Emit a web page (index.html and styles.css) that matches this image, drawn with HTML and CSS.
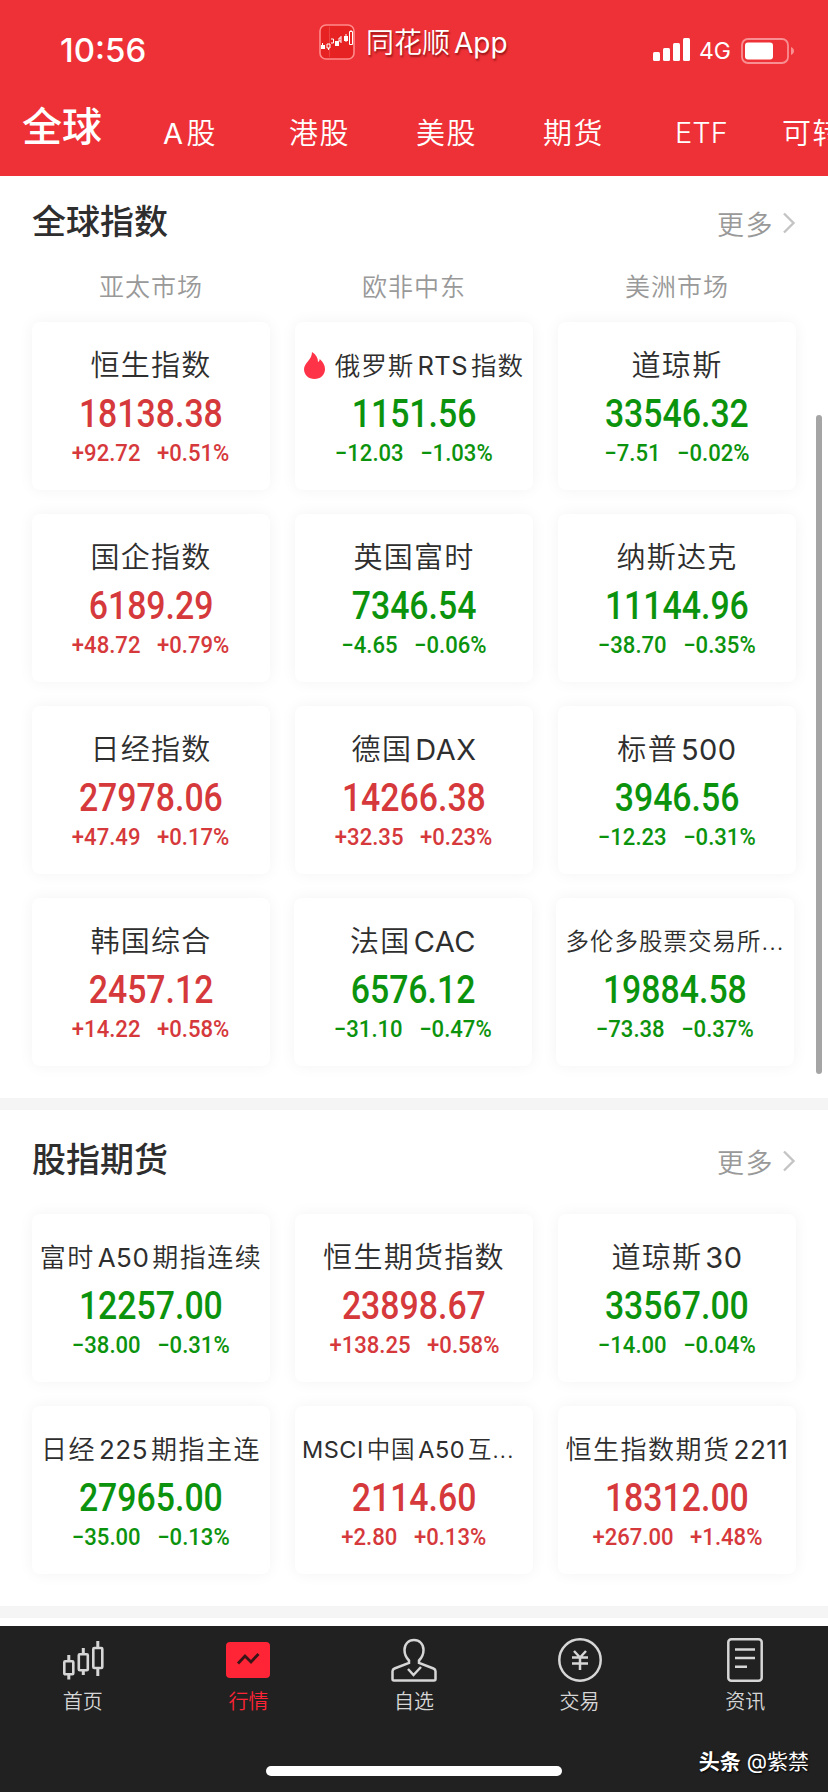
FILE: index.html
```html
<!DOCTYPE html>
<html lang="zh-CN">
	<head>
		<meta charset="UTF-8" />
		<meta name="viewport" content="width=device-width, initial-scale=1.0" />
		<title>行情</title>
		<link rel="stylesheet" href="styles.css">
	</head>
	<body>
		<header class="header">
			<div class="status">
				<span class="time">10:56</span>
				<div class="app">
					<svg class="app_logo" width="36" height="36" viewBox="0 0 36 36" fill="none">
						<rect x="1" y="1" width="34" height="34" rx="6" fill="#e62222" stroke="#ff8a8a" stroke-width="1.6" />
						<path d="M10.5 3v30" stroke="#f04a4a" stroke-width=".8" />
						<path d="M2 21h4v4H2zM16 17h4v5h-4zM25 12h4v5h-4z" fill="#fff" />
						<path d="M3.500 19v2M8 20h3v4H8zM9.500 24v2M12 15h2.500v4H12M22 14h-2v3h2M22 12v7M27 10v8M30.500 7.500h3v13h-3zM32 6v1.500" stroke="#fff" />
					</svg>
					<span>同花顺<span class="app_latin">App</span></span>
				</div>
				<div class="signal">
					<svg width="38" height="24" viewBox="0 0 38 24" fill="#fff">
						<rect x="0" y="14" width="7" height="9" rx="1.500" />
						<rect x="10" y="10" width="7" height="13" rx="1.500" />
						<rect x="20" y="5" width="7" height="18" rx="1.500" />
						<rect x="30" y="0" width="7" height="23" rx="1.500" />
					</svg>
					<span class="network">4G</span>
					<svg width="54" height="26" viewBox="0 0 54 26" fill="none">
						<rect x="1" y="1" width="46" height="24" rx="6" stroke="#f88f92" stroke-width="1.8" />
						<rect x="4" y="4.500" width="28" height="17" rx="3" fill="#fff" />
						<path d="M50 9c4 1.500 4 6.500 0 8z" fill="#f88f92" />
					</svg>
				</div>
			</div>
			<nav class="tabs">
				<a class="tab tab_active">全球</a>
				<a class="tab"><span class="latin_first">A</span>股</a>
				<a class="tab">港股</a>
				<a class="tab">美股</a>
				<a class="tab">期货</a>
				<a class="tab tab_etf">ETF</a>
				<a class="tab">可转</a>
			</nav>
		</header>

		<main class="content">
			<section class="section">
				<div class="section_head">
					<h2>全球指数</h2>
					<a class="more">更多
						<svg width="14" height="22" viewBox="0 0 14 22" fill="none" stroke="#c4c4c4" stroke-width="2.400"><path d="M2 1.500l9.500 9.500L2 20.500" /></svg>
					</a>
				</div>
				<div class="markets">
					<span>亚太市场</span>
					<span>欧非中东</span>
					<span>美洲市场</span>
				</div>
				<div class="grid">
					<div class="card up">
						<p class="name">恒生指数</p>
						<p class="price">18138.38</p>
						<p class="change"><span>+92.72</span><span>+0.51%</span></p>
					</div>
					<div class="card down">
						<p class="name name_hot">
							<svg width="21" height="27" viewBox="0 0 21 27"><path d="M8 0c4 2.500 6 6 6 10 1-.5 1.600-1.500 1.700-3C19 10 21 13 21 17c0 6-4.500 10-10.500 10S0 23 0 17C0 11 8 8 8 0z" fill="#ff3347" /></svg>
							<span>俄罗斯<span class="latin">RTS</span>指数</span>
						</p>
						<p class="price">1151.56</p>
						<p class="change"><span>−12.03</span><span>−1.03%</span></p>
					</div>
					<div class="card down">
						<p class="name">道琼斯</p>
						<p class="price">33546.32</p>
						<p class="change"><span>−7.51</span><span>−0.02%</span></p>
					</div>
					<div class="card up">
						<p class="name">国企指数</p>
						<p class="price">6189.29</p>
						<p class="change"><span>+48.72</span><span>+0.79%</span></p>
					</div>
					<div class="card down">
						<p class="name">英国富时</p>
						<p class="price">7346.54</p>
						<p class="change"><span>−4.65</span><span>−0.06%</span></p>
					</div>
					<div class="card down">
						<p class="name">纳斯达克</p>
						<p class="price">11144.96</p>
						<p class="change"><span>−38.70</span><span>−0.35%</span></p>
					</div>
					<div class="card up">
						<p class="name">日经指数</p>
						<p class="price">27978.06</p>
						<p class="change"><span>+47.49</span><span>+0.17%</span></p>
					</div>
					<div class="card up">
						<p class="name">德国<span class="latin_last">DAX</span></p>
						<p class="price">14266.38</p>
						<p class="change"><span>+32.35</span><span>+0.23%</span></p>
					</div>
					<div class="card down">
						<p class="name">标普<span class="latin_last">500</span></p>
						<p class="price">3946.56</p>
						<p class="change"><span>−12.23</span><span>−0.31%</span></p>
					</div>
				</div>
				<div class="grid grid_last">
					<div class="card up">
						<p class="name">韩国综合</p>
						<p class="price">2457.12</p>
						<p class="change"><span>+14.22</span><span>+0.58%</span></p>
					</div>
					<div class="card down">
						<p class="name">法国<span class="latin_last">CAC</span></p>
						<p class="price">6576.12</p>
						<p class="change"><span>−31.10</span><span>−0.47%</span></p>
					</div>
					<div class="card down">
						<p class="name name_sm">多伦多股票交易所...</p>
						<p class="price">19884.58</p>
						<p class="change"><span>−73.38</span><span>−0.37%</span></p>
					</div>
				</div>
			</section>

			<section class="section section_futures">
				<div class="section_head">
					<h2>股指期货</h2>
					<a class="more">更多
						<svg width="14" height="22" viewBox="0 0 14 22" fill="none" stroke="#c4c4c4" stroke-width="2.400"><path d="M2 1.500l9.500 9.500L2 20.500" /></svg>
					</a>
				</div>
				<div class="grid">
					<div class="card down">
						<p class="name name_md">富时<span class="latin">A50</span>期指连续</p>
						<p class="price">12257.00</p>
						<p class="change"><span>−38.00</span><span>−0.31%</span></p>
					</div>
					<div class="card up">
						<p class="name">恒生期货指数</p>
						<p class="price">23898.67</p>
						<p class="change"><span>+138.25</span><span>+0.58%</span></p>
					</div>
					<div class="card down">
						<p class="name">道琼斯<span class="latin_last">30</span></p>
						<p class="price">33567.00</p>
						<p class="change"><span>−14.00</span><span>−0.04%</span></p>
					</div>
					<div class="card down">
						<p class="name name_md">日经<span class="latin">225</span>期指主连</p>
						<p class="price">27965.00</p>
						<p class="change"><span>−35.00</span><span>−0.13%</span></p>
					</div>
					<div class="card up">
						<p class="name name_sm name_msci"><span class="latin_first">MSCI</span>中国<span class="latin">A50</span>互...</p>
						<p class="price">2114.60</p>
						<p class="change"><span>+2.80</span><span>+0.13%</span></p>
					</div>
					<div class="card up">
						<p class="name name_md">恒生指数期货<span class="latin_last">2211</span></p>
						<p class="price">18312.00</p>
						<p class="change"><span>+267.00</span><span>+1.48%</span></p>
					</div>
				</div>
			</section>
			<div class="scrollbar"></div>
		</main>

		<footer class="footer">
			<nav class="menu">
				<a class="menu_item">
					<svg width="44" height="44" viewBox="0 0 44 44" fill="none" stroke="#d6d6d6" stroke-width="2.600">
						<rect x="3.300" y="23.300" width="9" height="13" rx="1" />
						<rect x="17.800" y="16.300" width="9" height="16" rx="1" />
						<rect x="32.300" y="10" width="9" height="20" rx="1" />
						<path d="M7.800 17v6M7.800 37v4.500M22.300 10v6M22.300 33v4M36.800 3v7M36.800 30v8" stroke-width="3" />
					</svg>
					首页
				</a>
				<a class="menu_item menu_active">
					<svg width="44" height="44" viewBox="0 0 44 44" fill="none">
						<rect x="0" y="4" width="44" height="36" rx="4" fill="#ff2436" />
						<path d="M12 25.500l7-7.500 6 6 7.500-8" stroke="#3a1518" stroke-width="2.800" />
					</svg>
					行情
				</a>
				<a class="menu_item">
					<svg width="46" height="44" viewBox="0 0 46 44" fill="none" stroke="#d6d6d6" stroke-width="2.500">
						<path d="M18 25v-2.500C15 19.500 13.500 16 13.500 12c0-6 4-10 9.500-10s9.500 4 9.500 10c0 4-1.500 7.500-4.500 10.500V25l14.500 5.500c1.500.6 2 1.200 2 2.800V41c0 1-.5 1.500-1.500 1.500H3c-1 0-1.500-.5-1.500-1.500v-7.700c0-1.600.5-2.200 2-2.800z" />
						<path d="M17 31l5.500 6 7.500-8" />
					</svg>
					自选
				</a>
				<a class="menu_item">
					<svg width="44" height="44" viewBox="0 0 44 44" fill="none" stroke="#d6d6d6" stroke-width="2.500">
						<circle cx="22" cy="22" r="20.700" />
						<path d="M16 13l6 6.500 6-6.500M14 19.500h16M14 25.500h16M22 19.500V32" />
					</svg>
					交易
				</a>
				<a class="menu_item">
					<svg width="36" height="44" viewBox="0 0 36 44" fill="none" stroke="#d6d6d6" stroke-width="2.500">
						<rect x="1.300" y="1.300" width="33.400" height="41.400" rx="3" />
						<path d="M8 11.500h20M8 20h20M8 28.700h12" />
					</svg>
					资讯
				</a>
			</nav>
			<div class="home_bar"></div>
			<p class="author"><b>头条</b> @紫禁</p>
		</footer>
	</body>
</html>
```

FILE: styles.css
```css
* {
	box-sizing: border-box;
}

body {
	margin: 0;
	width: 828px;
	height: 1792px;
	overflow: hidden;
	display: flex;
	flex-direction: column;
	background: #fff;
	color: #2e2e2e;
	font-family: Inter, "Noto Sans CJK SC", sans-serif;
}

p,
h2 {
	margin: 0;
}

/* Red top area */
.header {
	height: 176px;
	background: #ee3137;
	color: #fff;
	overflow: hidden;
}

.status {
	display: grid;
	grid-template-columns: 319px 1fr 175px;
	height: 96px;
}

.time {
	padding: 30px 0 0 60px;
	font-size: 33px;
	font-weight: 500;
	line-height: 40px;
}

.app {
	display: flex;
	gap: 11px;
	padding-top: 24px;
	font-size: 28px;
	font-weight: 350;
	line-height: 38px;
	text-shadow: 1px 2px 2px rgba(90, 0, 0, 0.6);
}

.app_latin {
	margin-left: 4px;
	font-weight: 400;
}

.signal {
	display: flex;
	align-items: flex-start;
	padding-top: 38px;
}

.network {
	width: 43px;
	padding-left: 8px;
	margin-right: 7px;
	font-size: 23px;
	line-height: 26px;
}

.tabs {
	display: flex;
	align-items: center;
	padding-left: 22px;
	height: 70px;
	white-space: nowrap;
}

.tab {
	flex: none;
	width: 127px;
	padding-left: 13px;
	font-size: 29px;
	font-weight: 350;
	letter-spacing: 1.6px;
}

.tab:nth-child(2) {
	padding-left: 14px;
}

.tab_active {
	padding: 0 0 14px;
	font-size: 40px;
	font-weight: 500;
	letter-spacing: 0;
}

.tab_etf {
	width: 112px;
	padding: 2px 0 0 18px;
	letter-spacing: 0;
}

.latin,
.latin_first,
.latin_last {
	font-weight: 400;
	letter-spacing: 0.5px;
}

.latin {
	margin: 0 3px;
}

.latin_first {
	margin-right: 3px;
}

.latin_last {
	margin-left: 3px;
}

/* Quote sections */
.content {
	position: relative;
	height: 1450px;
}

.section {
	height: 934px;
	padding: 0 32px;
	border-bottom: 12px solid #f5f5f5;
}

.section_futures {
	height: 508px;
}

.section_head {
	display: flex;
	align-items: center;
	justify-content: space-between;
	height: 90px;
}

.section_futures .section_head {
	height: 104px;
	padding-bottom: 6px;
}

.section_head h2 {
	padding-bottom: 4px;
	font-size: 34px;
	font-weight: 500;
}

.more {
	display: flex;
	align-items: center;
	gap: 8px;
	padding-top: 4px;
	color: #999;
	font-size: 27px;
	font-weight: 350;
	letter-spacing: 1.5px;
}

.markets {
	display: grid;
	grid-template-columns: repeat(3, 238px);
	justify-content: space-between;
	height: 56px;
	color: #999;
	font-size: 25px;
	font-weight: 350;
	letter-spacing: 1px;
	line-height: 42px;
	text-align: center;
}

.grid {
	display: grid;
	grid-template-columns: repeat(3, 238px);
	justify-content: space-between;
	row-gap: 24px;
}

.grid_last {
	justify-content: start;
	column-gap: 24px;
	margin-top: 24px;
}

.card {
	display: flex;
	flex-direction: column;
	align-items: center;
	height: 168px;
	padding-top: 22px;
	border-radius: 8px;
	background: #fff;
	box-shadow: 0 0 16px rgba(0, 0, 0, 0.05);
	white-space: nowrap;
}

.name {
	font-size: 29px;
	font-weight: 350;
	letter-spacing: 1.3px;
	line-height: 43px;
}

.name_hot {
	display: flex;
	align-items: center;
	gap: 10px;
	font-size: 25.5px;
	letter-spacing: 1px;
}

.name_md {
	font-size: 26px;
	letter-spacing: 1.5px;
}

.name_sm {
	font-size: 23.5px;
	letter-spacing: 1px;
}

/* Clipped name starts at the card's left padding */
.name_msci {
	align-self: flex-start;
	padding-left: 7px;
	letter-spacing: 0.7px;
}

.up {
	color: #d6393b;
}

.down {
	color: #0c930e;
}

.card .name {
	color: #2e2e2e;
}

/* Narrow figures */
.price,
.change {
	font-family: Roboto, "Liberation Sans", sans-serif;
	font-weight: 500;
	transform: scaleX(0.89);
}

.price {
	font-size: 38px;
	line-height: 54px;
}

.change {
	display: flex;
	gap: 18px;
	font-size: 24px;
	line-height: 25px;
	transform: scaleX(0.92);
}

.scrollbar {
	position: absolute;
	top: 239px;
	right: 6px;
	width: 6px;
	height: 659px;
	border-radius: 3px;
	background: #a5a5a5;
}

/* Bottom menu */
.footer {
	position: relative;
	height: 166px;
	padding-top: 12px;
	background: #212121;
}

.menu {
	display: grid;
	grid-template-columns: repeat(5, 1fr);
}

.menu_item {
	display: flex;
	flex-direction: column;
	align-items: center;
	gap: 5px;
	color: #d6d6d6;
	font-size: 20px;
	font-weight: 350;
	line-height: 30px;
}

.menu_active {
	color: #ff2436;
}

.home_bar {
	width: 296px;
	height: 10px;
	margin: 49px auto 0;
	border-radius: 5px;
	background: #fff;
}

.author {
	position: absolute;
	right: 19px;
	bottom: 15px;
	color: #fff;
	font-size: 21px;
	line-height: 30px;
	text-shadow: 1px 1px 2px #000;
}
```
